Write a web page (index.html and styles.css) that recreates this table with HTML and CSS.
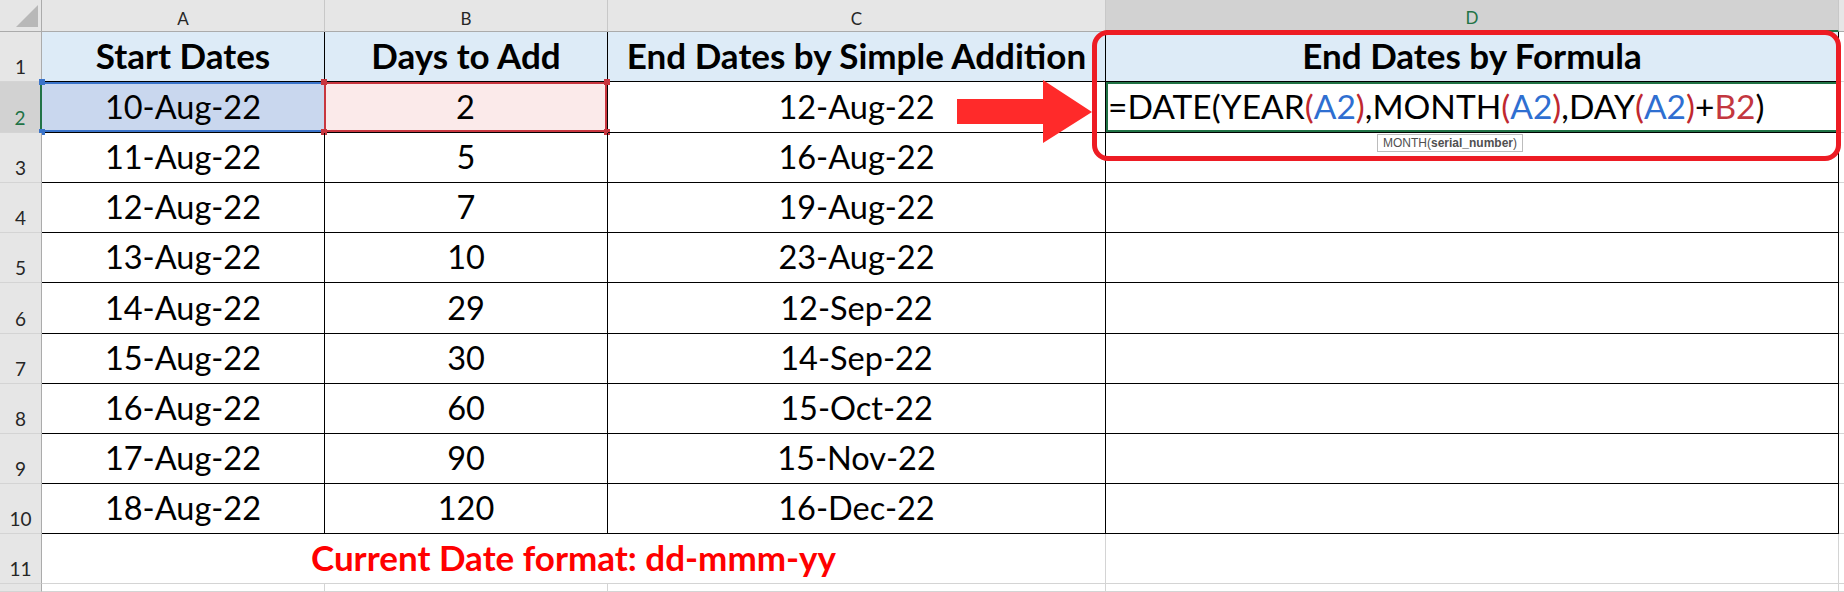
FILE: index.html
```html
<!DOCTYPE html>
<html>
<head>
<meta charset="utf-8">
<link rel="stylesheet" href="styles.css">
</head>
<body>
<div class="sheet">
  <div class="grid">
    <!-- column header row -->
    <div class="ch corner"><span class="tri"></span></div>
    <div class="ch">A</div>
    <div class="ch">B</div>
    <div class="ch">C</div>
    <div class="ch ch-sel">D</div>
    <div class="ch ch-e"></div>

    <!-- row 1 -->
    <div class="rh">1</div>
    <div class="c hd">Start Dates</div>
    <div class="c hd">Days to Add</div>
    <div class="c hd">End Dates by Simple Addition</div>
    <div class="c hd">End Dates by Formula</div>
    <div class="e"></div>

    <!-- row 2 -->
    <div class="rh rh-sel">2</div>
    <div class="c ref ref-a">10-Aug-22<span class="hdl h-tl"></span><span class="hdl h-bl"></span></div>
    <div class="c ref ref-b">2<span class="hdl h-tl"></span><span class="hdl h-tr"></span><span class="hdl h-bl"></span><span class="hdl h-br"></span></div>
    <div class="c">12-Aug-22</div>
    <div class="c active"><span class="formula">=DATE(YEAR<i class="p">(</i><i class="ra">A2</i><i class="p">)</i>,MONTH<i class="p">(</i><i class="ra">A2</i><i class="p">)</i>,DAY<i class="p">(</i><i class="ra">A2</i><i class="p">)</i>+<i class="rb">B2</i>)</span></div>
    <div class="e"></div>

    <div class="rh">3</div>
    <div class="c">11-Aug-22</div><div class="c">5</div><div class="c">16-Aug-22</div><div class="c"></div><div class="e"></div>
    <div class="rh">4</div>
    <div class="c">12-Aug-22</div><div class="c">7</div><div class="c">19-Aug-22</div><div class="c"></div><div class="e"></div>
    <div class="rh">5</div>
    <div class="c">13-Aug-22</div><div class="c">10</div><div class="c">23-Aug-22</div><div class="c"></div><div class="e"></div>
    <div class="rh">6</div>
    <div class="c">14-Aug-22</div><div class="c">29</div><div class="c">12-Sep-22</div><div class="c"></div><div class="e"></div>
    <div class="rh">7</div>
    <div class="c">15-Aug-22</div><div class="c">30</div><div class="c">14-Sep-22</div><div class="c"></div><div class="e"></div>
    <div class="rh">8</div>
    <div class="c">16-Aug-22</div><div class="c">60</div><div class="c">15-Oct-22</div><div class="c"></div><div class="e"></div>
    <div class="rh">9</div>
    <div class="c">17-Aug-22</div><div class="c">90</div><div class="c">15-Nov-22</div><div class="c"></div><div class="e"></div>
    <div class="rh">10</div>
    <div class="c">18-Aug-22</div><div class="c">120</div><div class="c">16-Dec-22</div><div class="c"></div><div class="e"></div>

    <!-- row 11 -->
    <div class="rh">11</div>
    <div class="g note">Current Date format: dd-mmm-yy</div>
    <div class="g"></div>
    <div class="e"></div>

    <!-- row 12 (partial) -->
    <div class="rh"></div>
    <div class="g"></div><div class="g"></div><div class="g"></div><div class="g"></div><div class="e"></div>
  </div>

  <svg class="arrow" width="140" height="66" viewBox="0 0 140 66">
    <polygon points="0,19 86,19 86,0 135,32 86,63 86,44 0,44" fill="#ff2a2a"/>
  </svg>
  <div class="callout"></div>
  <div class="tip">MONTH(<b>serial_number</b>)</div>
</div>
</body>
</html>
```

FILE: styles.css
```css
html, body {
  margin: 0;
  padding: 0;
  background: #ffffff;
}

.sheet {
  position: relative;
  width: 1844px;
  height: 592px;
  overflow: hidden;
  font-family: Lato, "Noto Sans", sans-serif;
  color: #000;
}

.grid {
  display: grid;
  grid-template-columns: 42px 283px 283px 498px 733px 5px;
  grid-template-rows: 32px 50px 51px 50px 50px 50px 51px 50px 50px 50px 50px 50px 8px;
}

.grid > div {
  box-sizing: border-box;
  position: relative;
}

/* column headers */
.ch {
  background: #e6e6e6;
  border-right: 1px solid #c8c8c8;
  border-bottom: 1px solid #ababab;
  font-size: 17px;
  color: #262626;
  display: flex;
  align-items: flex-end;
  justify-content: center;
  line-height: 1;
  padding-bottom: 4px;
}
.ch.corner {
  border-right: 1px solid #ababab;
}
.tri {
  position: absolute;
  right: 3px;
  bottom: 4px;
  width: 0;
  height: 0;
  border-left: 22px solid transparent;
  border-bottom: 22px solid #b8b8b8;
}
.ch-sel {
  background: #d2d2d2;
  color: #217346;
  border-bottom: 2px solid #217346;
}
.ch-e {
  border-right: none;
}

/* row headers */
.rh {
  background: #e6e6e6;
  border-right: 1px solid #ababab;
  border-bottom: 1px solid #d4d4d4;
  font-size: 19px;
  color: #262626;
  display: flex;
  align-items: flex-end;
  justify-content: center;
  line-height: 1;
  padding-bottom: 5px;
}
.rh-sel {
  background: #d2d2d2;
  color: #217346;
  border-right: 2px solid #217346;
}

/* table cells */
.c {
  border-right: 1px solid #000;
  border-bottom: 1px solid #000;
  font-size: 32.5px;
  display: flex;
  align-items: flex-end;
  justify-content: center;
  line-height: 1;
  padding-bottom: 9px;
  white-space: nowrap;
}
.hd {
  background: #ddebf7;
  font-weight: 700;
  font-size: 35px;
  padding-bottom: 8px;
}

.e {
  border-bottom: 1px solid #d4d4d4;
}

/* gridline cells */
.g {
  border-right: 1px solid #d4d4d4;
  border-bottom: 1px solid #d4d4d4;
}
.note {
  grid-column: span 3;
  color: #ff0000;
  font-weight: 700;
  font-size: 35px;
  display: flex;
  align-items: flex-end;
  justify-content: center;
  line-height: 1;
  padding-bottom: 8px;
}

/* formula references */
.ref-a {
  background: #c9d7ee;
  box-shadow: inset 0 2px 0 #3a73c9, inset 0 -2px 0 #3a73c9;
}
.ref-b {
  background: #fbeaea;
  box-shadow: inset 0 0 0 2px #c8363f;
  margin-left: -1px;
}
.hdl {
  position: absolute;
  width: 6px;
  height: 6px;
}
.ref-a .hdl { background: #3a73c9; }
.ref-b .hdl { background: #c8363f; }
.h-tl { left: -3px; top: -3px; }
.h-tr { right: -3px; top: -3px; }
.h-bl { left: -3px; bottom: -3px; }
.h-br { right: -3px; bottom: -3px; }

.active {
  justify-content: flex-start;
  box-shadow: inset 0 0 0 2px #217346;
  padding-left: 2px;
}
.formula {
  font-size: 33.5px;
}
.formula i {
  font-style: normal;
}
.formula .p { color: #c0282f; }
.formula .ra { color: #2f6fd1; }
.formula .rb { color: #c3373f; }

/* overlays */
.arrow {
  position: absolute;
  left: 957px;
  top: 80px;
}
.callout {
  position: absolute;
  left: 1092px;
  top: 30px;
  width: 749px;
  height: 131px;
  box-sizing: border-box;
  border: 5px solid #ed1c24;
  border-radius: 16px;
}
.tip {
  position: absolute;
  left: 1377px;
  top: 134px;
  height: 18px;
  box-sizing: border-box;
  padding: 0 5px;
  background: #fff;
  border: 1px solid #bcbcbc;
  font-family: "Liberation Sans", Arial, sans-serif;
  font-size: 12px;
  line-height: 16px;
  color: #505050;
  white-space: nowrap;
}
```
